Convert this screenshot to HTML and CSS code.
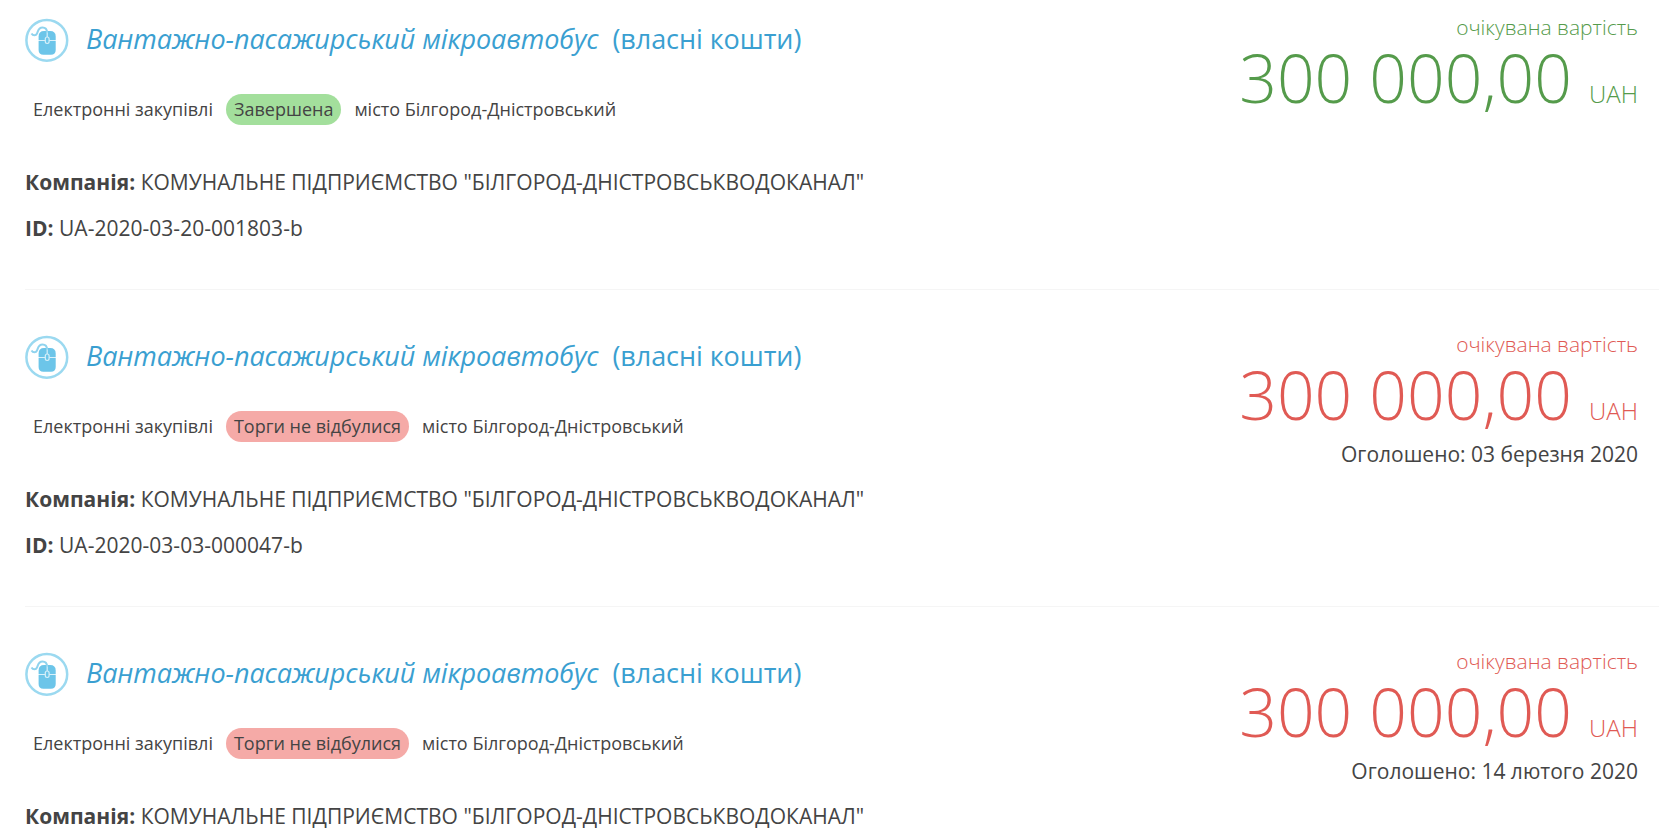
FILE: index.html
```html
<!DOCTYPE html>
<html lang="uk">
<head>
    <meta charset="UTF-8">
    <meta name="viewport" content="width=device-width, initial-scale=1.0">
    <title>Закупівлі</title>
    <link rel="stylesheet" href="styles.css">
</head>
<body>
    <!-- іконка типу закупівлі -->
    <svg class="sprite" width="0" height="0">
        <symbol id="mouse" viewBox="0 0 44 44">
            <circle cx="21.8" cy="22.3" r="20.4" fill="#fff" stroke="#9bd9f0" stroke-width="2.5"/>
            <path d="M13.6 22v-3.5q0-5.5 5.5-5.5h6q5.6 0 5.6 5.5V22z" fill="#6cc5e9"/>
            <path d="M13.6 22.8h17.1v9.2q0 4.8-4.8 4.8h-7.5q-4.8 0-4.8-4.8z" fill="#6cc5e9"/>
            <path d="M22.2 12v14" stroke="#d5eff9" stroke-width="1.2"/>
            <rect x="20.3" y="19" width="3.8" height="6.5" rx="1.9" fill="#6cc5e9" stroke="#d5eff9" stroke-width="1.2"/>
            <path d="M6.5 15.5c1.5 2.5 4.5 2.3 5.5 0 1-2.5 1.5-6 5.5-6 3 0 4.5 1.5 4.5 5" fill="none" stroke="#8fd3ee" stroke-width="2"/>
        </symbol>
    </svg>

    <div class="items-list">
        <div class="item">
            <div class="item-info">
                <a class="item-title" href="#"><svg class="icon"><use href="#mouse"/></svg><em>Вантажно-пасажирський мікроавтобус</em><span>(власні кошти)</span></a>
                <div class="item-bread"><span>Електронні закупівлі</span><span class="marked green">Завершена</span><span>місто Білгород-Дністровський</span></div>
                <div class="item-row"><strong>Компанія:</strong> КОМУНАЛЬНЕ ПІДПРИЄМСТВО "БІЛГОРОД-ДНІСТРОВСЬКВОДОКАНАЛ"</div>
                <div class="item-row"><strong>ID:</strong> UA-2020-03-20-001803-b</div>
            </div>
            <div class="item-price price-green">
                <div class="price-description">очікувана вартість</div>
                <div class="price">300 000,00 <span class="uah">UAH</span></div>
            </div>
        </div>
        <div class="item">
            <div class="item-info">
                <a class="item-title" href="#"><svg class="icon"><use href="#mouse"/></svg><em>Вантажно-пасажирський мікроавтобус</em><span>(власні кошти)</span></a>
                <div class="item-bread"><span>Електронні закупівлі</span><span class="marked red">Торги не відбулися</span><span>місто Білгород-Дністровський</span></div>
                <div class="item-row"><strong>Компанія:</strong> КОМУНАЛЬНЕ ПІДПРИЄМСТВО "БІЛГОРОД-ДНІСТРОВСЬКВОДОКАНАЛ"</div>
                <div class="item-row"><strong>ID:</strong> UA-2020-03-03-000047-b</div>
            </div>
            <div class="item-price price-red">
                <div class="price-description">очікувана вартість</div>
                <div class="price">300 000,00 <span class="uah">UAH</span></div>
                <div class="date">Оголошено: 03 березня 2020</div>
            </div>
        </div>
        <div class="item">
            <div class="item-info">
                <a class="item-title" href="#"><svg class="icon"><use href="#mouse"/></svg><em>Вантажно-пасажирський мікроавтобус</em><span>(власні кошти)</span></a>
                <div class="item-bread"><span>Електронні закупівлі</span><span class="marked red">Торги не відбулися</span><span>місто Білгород-Дністровський</span></div>
                <div class="item-row"><strong>Компанія:</strong> КОМУНАЛЬНЕ ПІДПРИЄМСТВО "БІЛГОРОД-ДНІСТРОВСЬКВОДОКАНАЛ"</div>
            </div>
            <div class="item-price price-red">
                <div class="price-description">очікувана вартість</div>
                <div class="price">300 000,00 <span class="uah">UAH</span></div>
                <div class="date">Оголошено: 14 лютого 2020</div>
            </div>
        </div>
    </div>
</body>
</html>
```
FILE: styles.css
```css
body {
    margin: 0;
    background-color: #fff;
    color: #444;
    font-family: "Open Sans", "Noto Sans", sans-serif;
}
.sprite {
    display: block;
}
.items-list {
    padding: 0 4px 0 25px;
}
.item {
    display: flex;
    justify-content: space-between;
    box-sizing: border-box;
    height: 317px;
    padding: 44px 21px 0 0;
    border-bottom: 1px solid #f5f5f5;
}
.item:first-child {
    height: 290px;
    padding-top: 17px;
}
.item:last-child {
    height: auto;
    border-bottom: none;
}
.item-title {
    display: flex;
    align-items: center;
    height: 46px;
    color: #3a9fd1;
    font-size: 27px;
    letter-spacing: -0.07px;
    line-height: 44px;
    text-decoration: none;
    white-space: nowrap;
}
.item-title em,
.item-title span {
    padding-bottom: 2px;
}
.item-title span {
    margin-left: 14px;
}
.icon {
    width: 44px;
    height: 44px;
    margin-right: 17px;
}
.item-bread {
    display: flex;
    align-items: center;
    height: 31px;
    margin: 31px 0 34px 8px;
    font-size: 18px;
    line-height: 31px;
    white-space: nowrap;
}
.item-bread span {
    height: 31px;
}
.marked {
    margin: 0 13px;
    padding: 0 8px;
    border-radius: 16px;
}
.green {
    background-color: #a3df9c;
}
.red {
    background-color: #f5aaa7;
}
.item-row {
    height: 46px;
    font-size: 21px;
    letter-spacing: 0.02px;
    line-height: 46px;
    white-space: nowrap;
}
.item-price {
    margin-top: -2px;
    text-align: right;
    white-space: nowrap;
}
.price-green {
    color: #559b4b;
}
.price-red {
    color: #e05a54;
}
.price-description {
    height: 24px;
    font-size: 21px;
    font-weight: 300;
    line-height: 24px;
}
.price {
    height: 81px;
    font-size: 66px;
    font-weight: 300;
    line-height: 76px;
}
.uah {
    font-size: 24px;
}
.date {
    color: #444;
    font-size: 21px;
    line-height: 34px;
}
```
